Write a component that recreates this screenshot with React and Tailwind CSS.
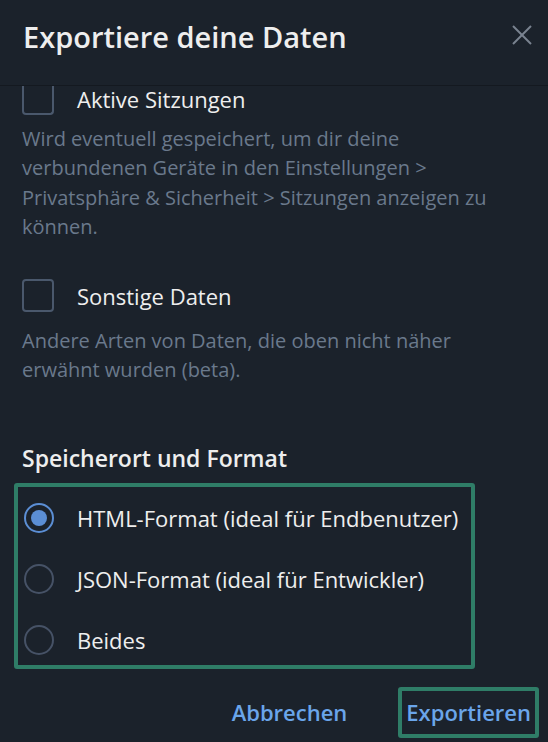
import { useState } from 'react'

const FORMATS = [
  { id: 'html', label: 'HTML-Format (ideal für Endbenutzer)' },
  { id: 'json', label: 'JSON-Format (ideal für Entwickler)' },
  { id: 'both', label: 'Beides' },
]

// cut: the list is scrolled, so the first box shows without its top edge
function Checkbox({ label, cut = false, className = '' }) {
  return (
    <div className={`flex gap-[23px] ${cut ? 'items-start' : 'items-center'} ${className}`}>
      {cut ? (
        <div className="w-[32px] h-[29px] shrink-0 rounded-b-[4px] border-2 border-t-0 border-[#4a586c]" />
      ) : (
        <div className="w-[32px] h-[33px] shrink-0 rounded-[4px] border-2 border-[#4a586c]" />
      )}
      <span className="text-[22px] leading-[26px] text-[#eeeeee]">{label}</span>
    </div>
  )
}

function Radio({ checked, label, onClick }) {
  return (
    <button type="button" onClick={onClick} className="flex items-center gap-[23px] h-[30px] text-left">
      <span
        className={`w-[30px] h-[30px] shrink-0 rounded-full border-[2.5px] flex items-center justify-center ${
          checked ? 'border-[#5b8ed4]' : 'border-[#465266]'
        }`}
      >
        {checked && <span className="w-[16px] h-[16px] rounded-full bg-[#5b8ed4]" />}
      </span>
      <span className="text-[22px] leading-[30px] text-[#eeeeee]">{label}</span>
    </button>
  )
}

export default function App() {
  const [format, setFormat] = useState('html')

  return (
    <div
      className="w-[548px] h-[742px] bg-[#1b222b] overflow-hidden flex flex-col"
      style={{ fontFamily: '"Open Sans", "Noto Sans", sans-serif' }}
    >
      {/* header */}
      <div className="h-[86px] shrink-0 flex justify-between pl-[23px] pr-[15px] pt-[17px] border-b border-[#141920]">
        <h1 className="text-[29px] leading-[40px] font-semibold text-[#eeeeee]">Exportiere deine Daten</h1>
        <button type="button" className="w-[22px] h-[22px] mt-[7px] text-[#7a8390]">
          <svg viewBox="0 0 22 22" width="22" height="22" fill="none" stroke="currentColor" strokeWidth="2">
            <line x1="2" y1="2" x2="20" y2="20" />
            <line x1="20" y1="2" x2="2" y2="20" />
          </svg>
        </button>
      </div>

      {/* scrolled body */}
      <div className="flex-1 px-[22px]">
        <Checkbox label="Aktive Sitzungen" cut />
        <p className="mt-[9px] text-[20px] leading-[29.3px] text-[#6a798c]">
          Wird eventuell gespeichert, um dir deine verbundenen Geräte in den Einstellungen &gt; Privatsphäre
          &amp; Sicherheit &gt; Sitzungen anzeigen zu können.
        </p>

        <Checkbox label="Sonstige Daten" className="mt-[38px]" />
        <p className="mt-[14px] text-[20px] leading-[29.3px] text-[#6a798c]">
          Andere Arten von Daten, die oben nicht näher erwähnt wurden (beta).
        </p>

        <h2 className="mt-[57px] text-[23px] leading-[32px] font-semibold text-[#eeeeee]">
          Speicherort und Format
        </h2>

        <div className="mt-[9px] -ml-[8px] w-[461px] border-4 border-[#2f7d67] rounded-[3px] pl-[6px] pt-[16px] pb-[10px] flex flex-col gap-[31px]">
          {FORMATS.map((f) => (
            <Radio key={f.id} label={f.label} checked={format === f.id} onClick={() => setFormat(f.id)} />
          ))}
        </div>

        <div className="mt-[18px] -mr-[13px] flex justify-end items-center gap-[51px]">
          <button type="button" className="text-[22px] leading-[30px] font-semibold text-[#6aa5ea]">
            Abbrechen
          </button>
          <button
            type="button"
            className="h-[51px] px-[4px] border-4 border-[#2f7d67] rounded-[3px] text-[22px] leading-[30px] font-semibold text-[#6aa5ea]"
          >
            Exportieren
          </button>
        </div>
      </div>
    </div>
  )
}
